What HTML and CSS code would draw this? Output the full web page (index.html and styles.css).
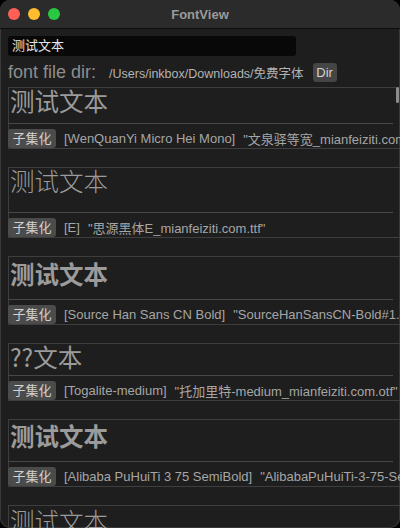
FILE: index.html
```html
<!DOCTYPE html>
<html lang="zh">
<head>
	<meta charset="UTF-8" />
	<title>FontView</title>
	<link rel="stylesheet" href="styles.css">
</head>
<body>
	<div class="window">
		<div class="titlebar">
			<div class="lights">
				<span class="light red"></span>
				<span class="light yellow"></span>
				<span class="light green"></span>
			</div>
			<div class="title">FontView</div>
			<div></div>
		</div>
		<div class="content">
			<div class="text-input">测试文本</div>
			<div class="dir-row">
				<span class="dir-label">font file dir:</span>
				<span class="dir-path">/Users/inkbox/Downloads/免费字体</span>
				<span class="btn dir-btn">Dir</span>
			</div>
			<div class="list">
				<div class="card">
					<div class="sample s1">测试文本</div>
					<div class="row">
						<span class="btn sub-btn">子集化</span>
						<span class="name">[WenQuanYi Micro Hei Mono]</span>
						<span class="file">"文泉驿等宽_mianfeiziti.com.ttf"</span>
					</div>
				</div>
				<div class="card">
					<div class="sample s2">测试文本</div>
					<div class="row">
						<span class="btn sub-btn">子集化</span>
						<span class="name">[E]</span>
						<span class="file">"思源黑体E_mianfeiziti.com.ttf"</span>
					</div>
				</div>
				<div class="card">
					<div class="sample s3">测试文本</div>
					<div class="row">
						<span class="btn sub-btn">子集化</span>
						<span class="name">[Source Han Sans CN Bold]</span>
						<span class="file">"SourceHanSansCN-Bold#1.otf"</span>
					</div>
				</div>
				<div class="card">
					<div class="sample s4">??文本</div>
					<div class="row">
						<span class="btn sub-btn">子集化</span>
						<span class="name">[Togalite-medium]</span>
						<span class="file">"托加里特-medium_mianfeiziti.com.otf"</span>
					</div>
				</div>
				<div class="card">
					<div class="sample s5">测试文本</div>
					<div class="row">
						<span class="btn sub-btn">子集化</span>
						<span class="name">[Alibaba PuHuiTi 3 75 SemiBold]</span>
						<span class="file">"AlibabaPuHuiTi-3-75-SemiBold.ttf"</span>
					</div>
				</div>
				<div class="card">
					<div class="sample s6">测试文本</div>
				</div>
			</div>
		</div>
		<div class="scroll-thumb"></div>
	</div>
</body>
</html>
```

FILE: styles.css
```css
body{
	margin:0;
	background:#000;
	font-family:"Liberation Sans","Noto Sans CJK SC",sans-serif;
}
.window{
	position:relative;
	width:400px;
	height:528px;
	border-radius:10px;
	overflow:hidden;
	background:#1e1e1e;
	box-shadow:inset 0 0 0 1px #3a3a3a;
}
.titlebar{
	display:grid;
	grid-template-columns:1fr auto 1fr;
	align-items:center;
	height:28px;
	background:#2b2b2b;
	border-bottom:1px solid #0e0e0e;
}
.lights{
	display:flex;
	gap:8px;
	padding-left:8px;
}
.light{
	width:12px;
	height:12px;
	border-radius:50%;
}
.red{background:#fe5f57;}
.yellow{background:#febc2e;}
.green{background:#28c840;}
.title{
	font-size:13px;
	font-weight:bold;
	color:#9a9a9a;
}
.content{
	padding:7px 0 0 8px;
}
.text-input{
	width:284px;
	height:20px;
	line-height:20px;
	padding-left:4px;
	background:#080808;
	border-radius:3px;
	font-size:13px;
	color:#e6e6e6;
}
.dir-row{
	display:flex;
	align-items:center;
	height:19px;
	margin-top:7px;
	white-space:nowrap;
}
.dir-label{
	font-size:18px;
	color:#8d8d8d;
	margin-right:13px;
}
.dir-path{
	font-size:12.5px;
	color:#b3b3b3;
}
.btn{
	display:inline-block;
	flex-shrink:0;
	background:#454545;
	border-radius:3px;
	font-size:13px;
	color:#d2d2d2;
	text-align:center;
}
.dir-btn{
	width:24px;
	height:19px;
	line-height:19px;
	margin-left:9px;
}
.list{
	margin-top:5px;
}
.card{
	width:440px;
	border:1px solid #3e3e3e;
	border-right:none;
	margin-bottom:18px;
}
.sample{
	width:383px;
	margin-left:-1px;
	padding-left:2px;
	border-bottom:1px solid #474747;
	font-family:"Noto Sans CJK SC",sans-serif;
	font-size:24.5px;
	line-height:25px;
	color:#9b9b9b;
}
.s1{height:35px;}
.s2{height:44px;font-weight:300;}
.s3{height:38px;padding-top:4px;font-weight:bold;}
.s4{height:31px;}
.s5{height:38px;padding-top:3px;font-weight:bold;}
.s6{height:44px;padding-top:2px;font-weight:300;}
.row{
	display:flex;
	align-items:center;
	height:19px;
	padding-top:5px;
	margin-left:-1px;
	white-space:nowrap;
	font-size:13px;
	color:#a6a6a6;
}
.row span{
	flex-shrink:0;
}
.sub-btn{
	width:48px;
	height:19px;
	line-height:19px;
	background:#4b4b4b;
	margin-right:8px;
}
.file{
	margin-left:8px;
}
.scroll-thumb{
	position:absolute;
	right:1px;
	top:87px;
	width:3px;
	height:16px;
	border-radius:2px;
	background:#8c8c8c;
}
```
